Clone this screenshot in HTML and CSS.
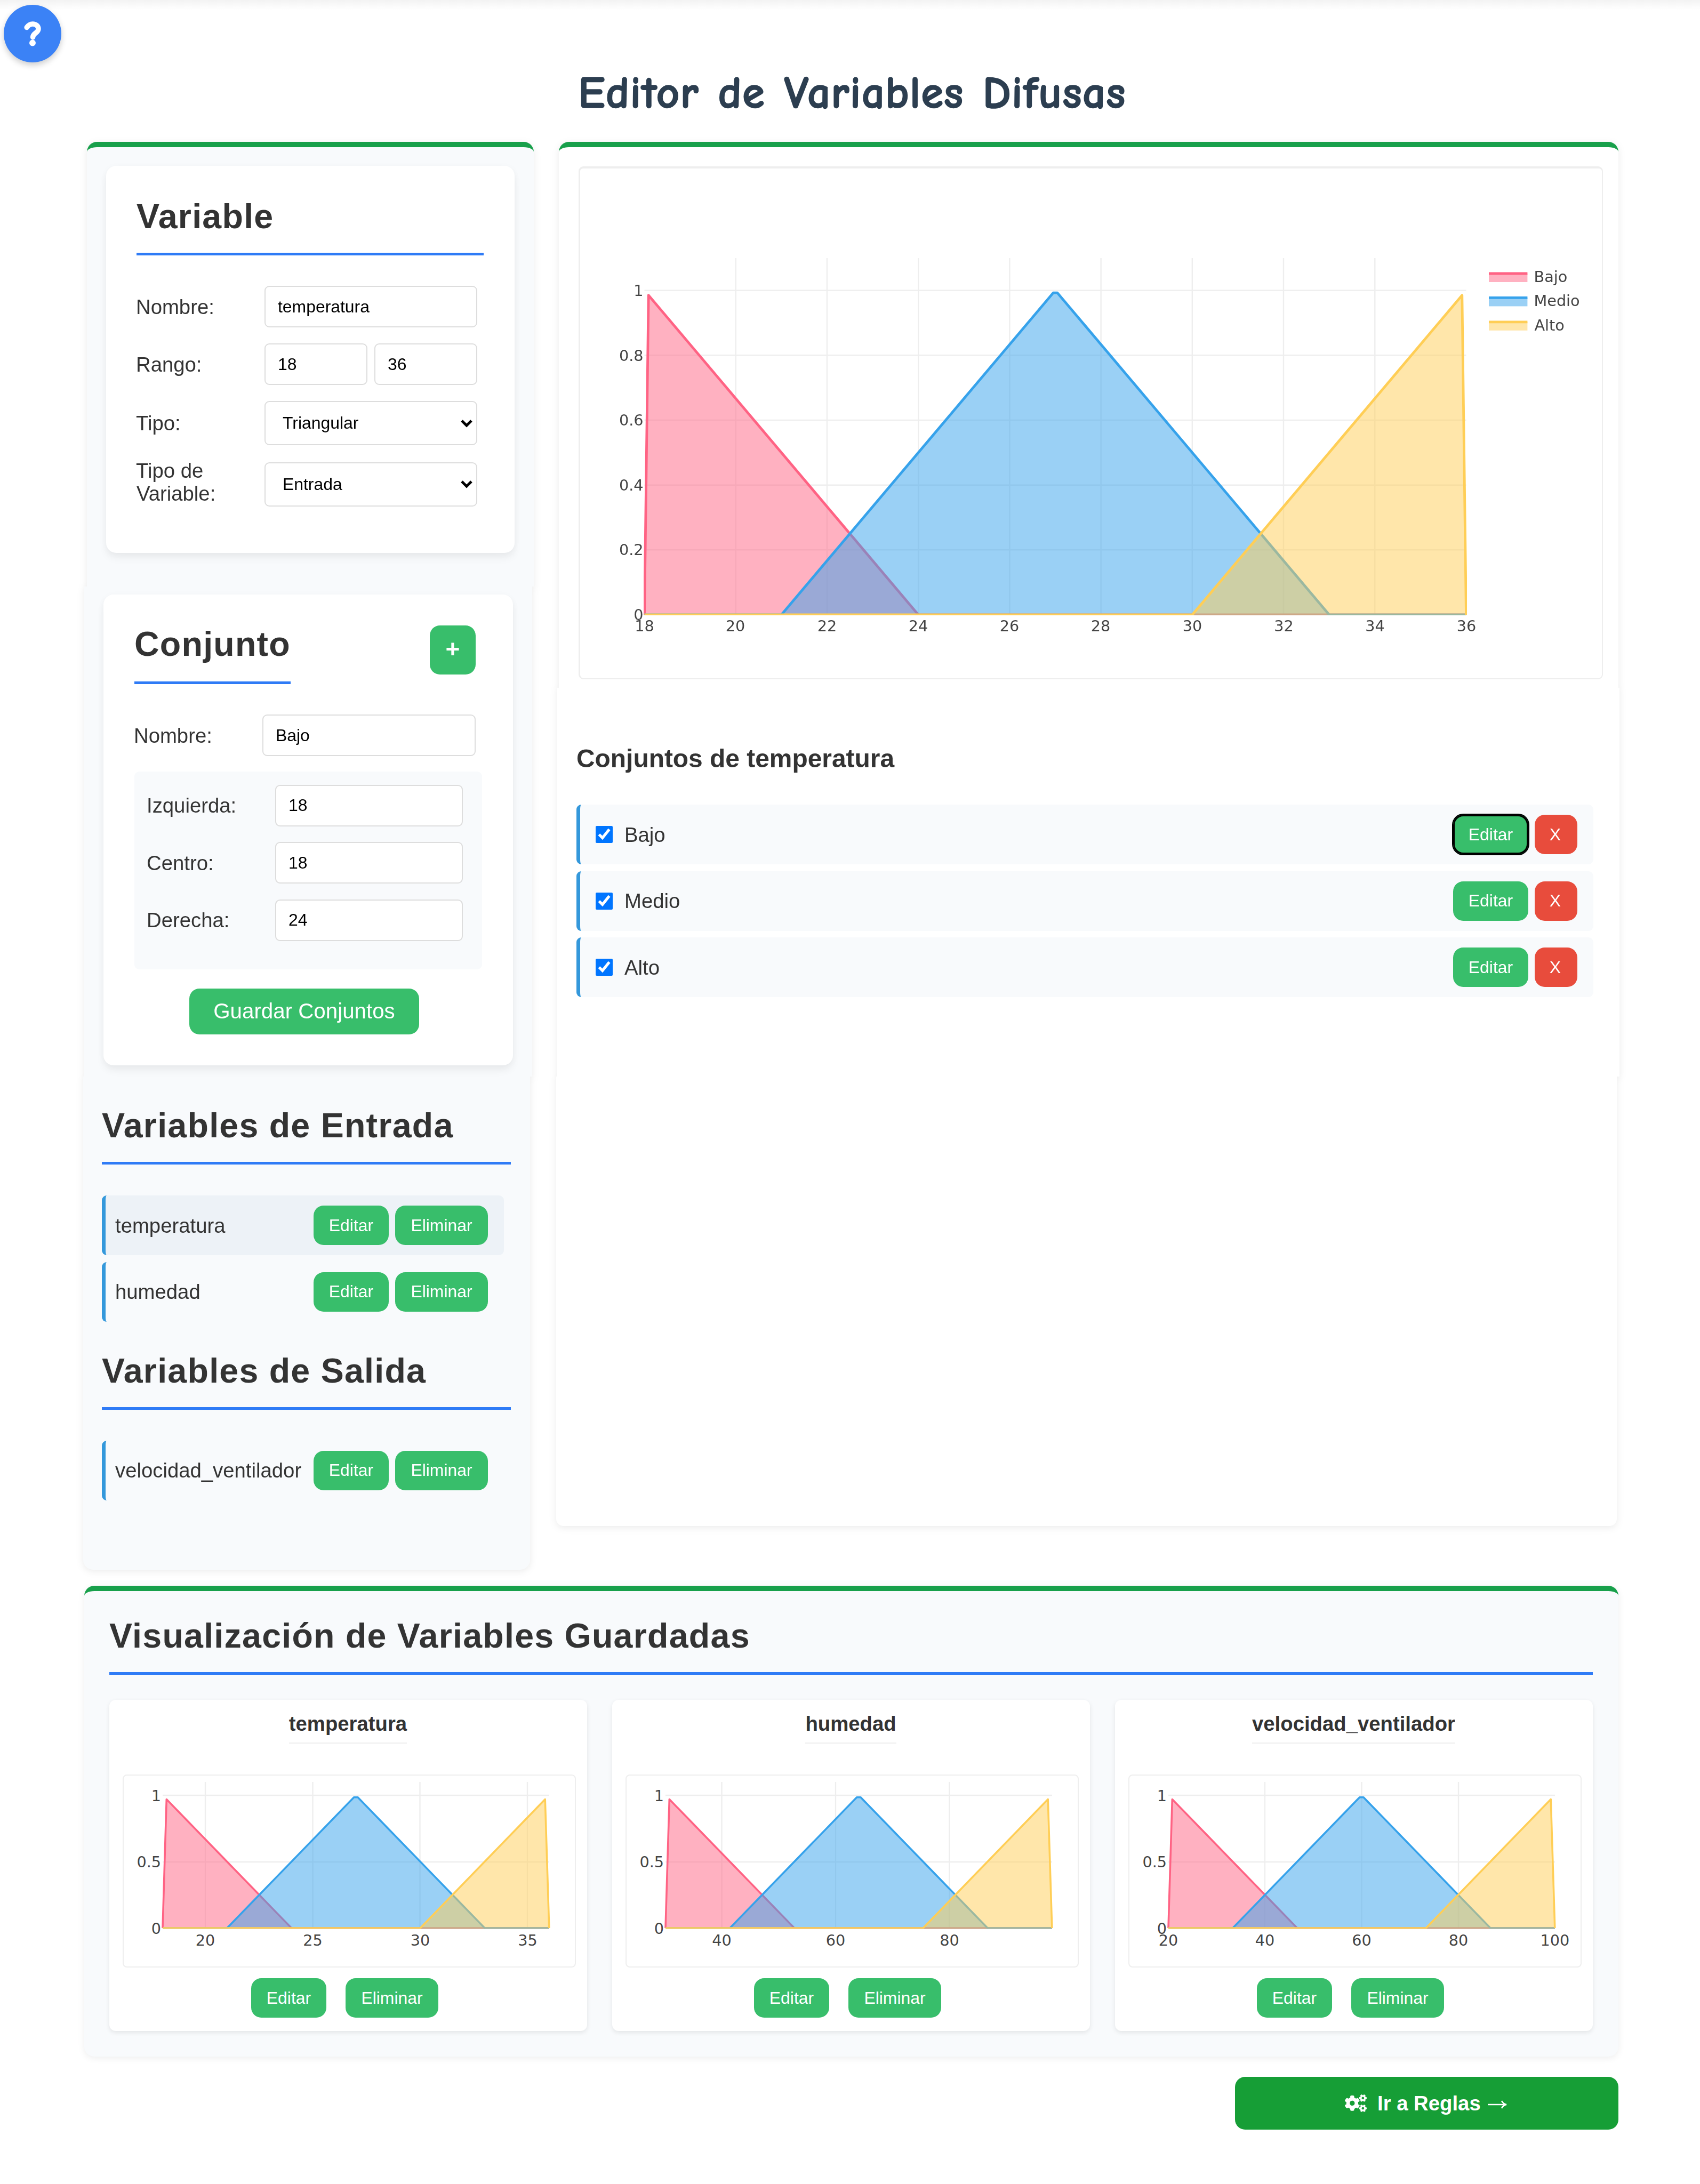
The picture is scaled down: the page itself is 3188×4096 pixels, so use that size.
FILE: index.html
```
<!DOCTYPE html>
<html lang="es">
<head>
<meta charset="utf-8">
<title>Editor de Variables Difusas</title>
<link rel="stylesheet" href="styles.css">
</head>
<body>
<svg class="defs" width="0" height="0" aria-hidden="true">
  <defs>
    <clipPath id="clip-mini"><rect x="71" y="12" width="729" height="275.500"/></clipPath>
    <clipPath id="clip-main"><rect x="119" y="170" width="1544" height="670"/></clipPath>
    <g id="mini-traces" clip-path="url(#clip-mini)">
      <path class="fill-low" d="M73 288L80.3 44.5L314.6 288Z"/>
      <path class="line-low" d="M73 286L80.3 44.5L314.6 286H797.8"/>
      <path class="fill-mid" d="M193.8 288L431.7 40.7H439L677 288Z"/>
      <path class="line-mid" d="M73 286H193.8L431.7 40.7H439L677 286H797.8"/>
      <path class="fill-high" d="M556.2 288L790.2 44.5L797.8 288Z"/>
      <path class="line-high" d="M73 286H556.2L790.2 44.5L797.8 286"/>
    </g>
    <g id="mini-axis">
      <path class="grid" d="M73 37H798M73 162H798"/>
      <text class="tick end" x="70" y="48">1</text>
      <text class="tick end" x="70" y="172">0.5</text>
      <text class="tick end" x="70" y="297">0</text>
    </g>
  </defs>
</svg>

<button class="help" aria-label="Ayuda">
  <svg width="32" height="47" viewBox="0 0 32 47"><path class="help-hook" d="M5.2 11.5C8 7.300 11.500 5 16.300 5C22 5 27 8.600 27 14.200C27 22 16.600 21.800 16.600 30"/><circle class="help-dot" cx="16" cy="40.500" r="6"/></svg>
</button>

<h1 class="title">Editor de Variables Difusas</h1>

<main class="workspace">
  <div class="sidebar">
    <div class="side-top">
      <section class="card">
        <h2 class="heading">Variable</h2>
        <div class="form">
          <div class="row"><label class="label">Nombre:</label><input class="field wide" value="temperatura"></div>
          <div class="row"><label class="label">Rango:</label><input class="field half" value="18"><input class="field half" value="36"></div>
          <div class="row"><label class="label">Tipo:</label><div class="select"><span>Triangular</span><svg width="24" height="16" viewBox="0 0 24 16"><path class="chevron" d="M3 3L12 12L21 3"/></svg></div></div>
          <div class="row"><label class="label two">Tipo de Variable:</label><div class="select"><span>Entrada</span><svg width="24" height="16" viewBox="0 0 24 16"><path class="chevron" d="M3 3L12 12L21 3"/></svg></div></div>
        </div>
      </section>
    </div>
    <div class="side-mid">
      <section class="card set-card">
        <div class="set-head">
          <h2 class="heading">Conjunto</h2>
          <button class="btn add">+</button>
        </div>
        <div class="row"><label class="label">Nombre:</label><input class="field set-name" value="Bajo"></div>
        <div class="params">
          <div class="row"><label class="label">Izquierda:</label><input class="field param" value="18"></div>
          <div class="row"><label class="label">Centro:</label><input class="field param" value="18"></div>
          <div class="row"><label class="label">Derecha:</label><input class="field param" value="24"></div>
        </div>
        <button class="btn save">Guardar Conjuntos</button>
      </section>
    </div>
    <div class="side-end">
      <h2 class="heading">Variables de Entrada</h2>
      <ul class="vars">
        <li class="var active"><span>temperatura</span><button class="btn edit">Editar</button><button class="btn del">Eliminar</button></li>
        <li class="var"><span>humedad</span><button class="btn edit">Editar</button><button class="btn del">Eliminar</button></li>
      </ul>
      <h2 class="heading out">Variables de Salida</h2>
      <ul class="vars">
        <li class="var"><span>velocidad_ventilador</span><button class="btn edit">Editar</button><button class="btn del">Eliminar</button></li>
      </ul>
    </div>
  </div>

  <div class="board">
    <div class="board-top">
      <div class="main-chart">
        <svg width="1916" height="958" viewBox="0 0 1916 958">
          <path class="grid" d="M291.7 170V839M462.900 170V839M634.200 170V839M805.400 170V839M976.600 170V839M1147.800 170V839M1319 170V839M1490.300 170V839M120.500 230.600H1661.500M120.500 352.300H1661.500M120.500 474H1661.500M120.500 595.700H1661.500M120.500 717.300H1661.500"/>
          <g class="thick" clip-path="url(#clip-main)">
            <path class="fill-low" d="M120.500 841L128.200 239.700L634.200 841Z"/>
            <path class="line-low" d="M120.500 839L128.200 239.700L634.200 839H1661.500"/>
            <path class="fill-mid" d="M377.300 841L887.100 235.200H894.900L1404.700 841Z"/>
            <path class="line-mid" d="M120.500 839H377.300L887.100 235.200H894.900L1404.700 839H1661.500"/>
            <path class="fill-high" d="M1147.800 841L1653.800 239.700L1661.500 841Z"/>
            <path class="line-high" d="M120.500 839H1147.800L1653.800 239.700L1661.500 839"/>
          </g>
          <g class="tick end">
            <text x="118.500" y="241">1</text><text x="118.500" y="363">0.8</text><text x="118.500" y="484">0.6</text><text x="118.500" y="606">0.4</text><text x="118.500" y="727">0.2</text><text x="118.500" y="849">0</text>
          </g>
          <g class="tick mid">
            <text x="120.500" y="870">18</text><text x="291" y="870">20</text><text x="463" y="870">22</text><text x="634" y="870">24</text><text x="805" y="870">26</text><text x="976" y="870">28</text><text x="1148" y="870">30</text><text x="1319.500" y="870">32</text><text x="1490.500" y="870">34</text><text x="1662" y="870">36</text>
          </g>
          <rect class="fill-low" x="1704" y="199" width="72.400" height="16"/><path class="line-low key" d="M1704 199H1776.400"/>
          <rect class="fill-mid" x="1704" y="244.400" width="72.400" height="16"/><path class="line-mid key" d="M1704 244.400H1776.400"/>
          <rect class="fill-high" x="1704" y="289.800" width="72.400" height="16"/><path class="line-high key" d="M1704 289.800H1776.400"/>
          <g class="tick"><text x="1788.500" y="215">Bajo</text><text x="1788.500" y="260.400">Medio</text><text x="1789.500" y="306">Alto</text></g>
        </svg>
      </div>
    </div>
    <div class="board-mid">
      <h3 class="subheading">Conjuntos de temperatura</h3>
      <ul class="sets">
        <li class="set"><input type="checkbox" class="check" checked><span>Bajo</span><button class="btn edit focused">Editar</button><button class="btn remove">X</button></li>
        <li class="set"><input type="checkbox" class="check" checked><span>Medio</span><button class="btn edit">Editar</button><button class="btn remove">X</button></li>
        <li class="set"><input type="checkbox" class="check" checked><span>Alto</span><button class="btn edit">Editar</button><button class="btn remove">X</button></li>
      </ul>
    </div>
    <div class="board-end"></div>
  </div>
</main>

<section class="saved">
  <h2 class="heading">Visualización de Variables Guardadas</h2>
  <div class="minis">
    <article class="mini">
      <h4 class="mini-title">temperatura</h4>
      <div class="mini-chart"><svg width="846" height="358" viewBox="0 0 846 358">
        <path class="grid" d="M153 12V286M354.500 12V286M555.500 12V286M757 12V286"/>
        <use href="#mini-axis"/><use href="#mini-traces"/>
        <g class="tick mid"><text x="153" y="319">20</text><text x="354.500" y="319">25</text><text x="556" y="319">30</text><text x="757.500" y="319">35</text></g>
      </svg></div>
      <div class="actions"><button class="btn edit">Editar</button><button class="btn del">Eliminar</button></div>
    </article>
    <article class="mini">
      <h4 class="mini-title">humedad</h4>
      <div class="mini-chart"><svg width="846" height="358" viewBox="0 0 846 358">
        <path class="grid" d="M178.500 12V286M392 12V286M605.500 12V286"/>
        <use href="#mini-axis"/><use href="#mini-traces"/>
        <g class="tick mid"><text x="178.500" y="319">40</text><text x="392" y="319">60</text><text x="605.500" y="319">80</text></g>
      </svg></div>
      <div class="actions"><button class="btn edit">Editar</button><button class="btn del">Eliminar</button></div>
    </article>
    <article class="mini">
      <h4 class="mini-title">velocidad_ventilador</h4>
      <div class="mini-chart"><svg width="846" height="358" viewBox="0 0 846 358">
        <path class="grid" d="M254 12V286M435.500 12V286M617 12V286"/>
        <use href="#mini-axis"/><use href="#mini-traces"/>
        <g class="tick mid"><text x="73" y="319">20</text><text x="254" y="319">40</text><text x="435.500" y="319">60</text><text x="617" y="319">80</text><text x="798" y="319">100</text></g>
      </svg></div>
      <div class="actions"><button class="btn edit">Editar</button><button class="btn del">Eliminar</button></div>
    </article>
  </div>
</section>

<a class="next"><svg width="41" height="33" viewBox="0 0 640 512"><path d="M512.1 191l-8.2 14.3c-3 5.3-9.4 7.5-15.1 5.4-11.8-4.4-22.6-10.7-32.1-18.6-4.6-3.8-5.8-10.5-2.8-15.7l8.2-14.3c-6.9-8-12.3-17.3-15.9-27.4h-16.500c-6 0-11.200-4.300-12.200-10.300-2-12-2.100-24.600 0-37.100 1-6 6.200-10.400 12.200-10.400h16.500c3.600-10.100 9-19.400 15.900-27.400l-8.200-14.300c-3-5.200-1.900-11.900 2.800-15.700 9.500-7.900 20.400-14.200 32.100-18.600 5.700-2.100 12.100.1 15.100 5.400l8.200 14.300c10.500-1.900 21.200-1.900 31.700 0L552 6.300c3-5.300 9.400-7.500 15.100-5.400 11.800 4.400 22.600 10.700 32.100 18.600 4.600 3.800 5.800 10.500 2.800 15.700l-8.200 14.300c6.900 8 12.300 17.300 15.900 27.400h16.500c6 0 11.200 4.300 12.200 10.300 2 12 2.100 24.600 0 37.100-1 6-6.200 10.400-12.200 10.400h-16.500c-3.600 10.100-9 19.400-15.900 27.400l8.200 14.300c3 5.200 1.900 11.900-2.800 15.700-9.500 7.900-20.400 14.200-32.100 18.600-5.700 2.100-12.100-.1-15.100-5.400l-8.200-14.300c-10.400 1.900-21.200 1.900-31.700 0zm-10.500-58.800c38.500 29.600 82.400-14.300 52.800-52.800-38.500-29.700-82.400 14.300-52.800 52.800zM386.300 286.100l33.700 16.800c10.100 5.800 14.500 18.100 10.500 29.100-8.900 24.200-26.400 46.400-42.600 65.800-7.400 8.900-20.200 11.100-30.300 5.300l-29.100-16.800c-16 13.700-34.600 24.600-54.900 31.700v33.600c0 11.600-8.300 21.600-19.700 23.600-24.600 4.200-50.400 4.400-75.900 0-11.500-2-20-11.900-20-23.600V418c-20.300-7.200-38.900-18-54.900-31.700L74 403c-10 5.800-22.900 3.600-30.300-5.300-16.200-19.400-33.300-41.600-42.200-65.700-4-10.900.4-23.200 10.500-29.100l33.300-16.800c-3.900-20.900-3.900-42.400 0-63.400L12 205.800c-10.100-5.800-14.600-18.100-10.500-29 8.900-24.200 26-46.400 42.200-65.800 7.400-8.900 20.200-11.100 30.300-5.300l29.100 16.800c16-13.700 34.600-24.600 54.900-31.700V57.100c0-11.500 8.200-21.500 19.600-23.500 24.600-4.200 50.500-4.400 76-.1 11.500 2 20 11.900 20 23.600v33.600c20.300 7.200 38.900 18 54.900 31.700l29.100-16.800c10-5.800 22.900-3.600 30.300 5.300 16.200 19.400 33.200 41.600 42.100 65.800 4 10.900.1 23.200-10 29.100l-33.700 16.800c3.900 21 3.900 42.500 0 63.500zm-117.600 21.100c59.200-77-28.700-164.900-105.700-105.700-59.200 77 28.700 164.900 105.700 105.700zm243.400 182.700l-8.200 14.300c-3 5.300-9.400 7.500-15.100 5.400-11.800-4.400-22.600-10.700-32.100-18.600-4.600-3.800-5.800-10.500-2.800-15.700l8.200-14.300c-6.900-8-12.300-17.300-15.900-27.400h-16.500c-6 0-11.200-4.300-12.200-10.300-2-12-2.100-24.600 0-37.100 1-6 6.200-10.400 12.200-10.400h16.500c3.600-10.100 9-19.400 15.900-27.400l-8.200-14.300c-3-5.200-1.900-11.900 2.800-15.700 9.500-7.900 20.400-14.200 32.100-18.600 5.700-2.100 12.100.1 15.100 5.400l8.200 14.300c10.500-1.900 21.200-1.900 31.700 0l8.200-14.300c3-5.300 9.400-7.500 15.100-5.400 11.800 4.400 22.600 10.700 32.100 18.600 4.600 3.800 5.800 10.500 2.800 15.700l-8.200 14.300c6.900 8 12.300 17.300 15.900 27.400h16.500c6 0 11.200 4.300 12.200 10.300 2 12 2.100 24.600 0 37.100-1 6-6.200 10.400-12.200 10.400h-16.500c-3.600 10.100-9 19.400-15.900 27.400l8.200 14.300c3 5.200 1.900 11.900-2.800 15.700-9.500 7.900-20.400 14.200-32.100 18.600-5.700 2.100-12.100-.1-15.100-5.400l-8.200-14.300c-10.400 1.900-21.200 1.900-31.700 0zM501.600 431c38.500 29.600 82.400-14.300 52.800-52.800-38.500-29.600-82.400 14.300-52.800 52.800z"/></svg><span>Ir a Reglas</span><svg class="arrow" width="38" height="20" viewBox="0 0 38 20"><path d="M1 10H35M27 3C29 7 31 9 36 10C31 11 29 13 27 17"/></svg></a>
</body>
</html>
```

FILE: styles.css
```
* { box-sizing: border-box; }
body {
  margin: 0; width: 3188px; height: 4096px; overflow: hidden; background: #fff;
  font: 38.300px/43px "Liberation Sans", Arial, sans-serif; color: #333;
  display: flex; flex-direction: column;
  background-image: linear-gradient(#f3f3f3, #fff 18px); background-repeat: no-repeat;
}
h1, h2, h3, h4, ul { margin: 0; padding: 0; }
ul { list-style: none; }
svg { display: block; flex: none; }
.defs { position: absolute; }

.help {
  position: absolute; left: 7px; top: 9px; width: 108px; height: 108px; padding: 0 1px 0 0; border: 0;
  border-radius: 50%; background: #3b82f6; box-shadow: 0 5px 12px rgba(0,0,0,.2);
  display: flex; align-items: center; justify-content: center;
}
.help-hook { fill: none; stroke: #fff; stroke-width: 9.500; stroke-linecap: round; stroke-linejoin: round; }
.help-dot { fill: #fff; }

.title {
  height: 266px; padding-top: 119px; padding-left: 8px; text-align: center; white-space: nowrap;
  font: 700 85px/110px "Comic Sans MS", "Comic Neue", Lato, sans-serif; letter-spacing: 1.200px; word-spacing: 4px; color: #2c3e50;
  -webkit-text-stroke: 1.600px #2c3e50;
}

.workspace { display: flex; align-items: flex-start; gap: 42px; height: 2708px; flex: none; margin-left: 156px; }
.sidebar { width: 845px; filter: drop-shadow(0 3px 7px rgba(0,0,0,.08)); }
.side-top, .side-mid, .side-end { background: #f8fafc; }
.side-top { margin-left: 7px; width: 838px; height: 834px; border-top: 10px solid #18a04b; border-radius: 19px 19px 0 0; padding: 35px 36px 0; }
.side-mid { margin-left: 2px; width: 840px; height: 919px; padding: 15px 36px 0; }
.side-end { width: 838px; height: 925px; padding: 57px 36px 0 35px; border-radius: 0 0 19px 19px; }

.card { background: #fff; border-radius: 19px; box-shadow: 0 10px 15px rgba(0,0,0,.05), 0 2px 14px rgba(0,0,0,.03); height: 726px; padding: 60px 58px 0 57px; }
.heading { font-size: 64.500px; line-height: 70px; letter-spacing: 1.250px; padding-bottom: 33px; border-bottom: 5px solid #2f7bf6; white-space: nowrap; }
.form { margin-top: 57px; display: flex; flex-direction: column; gap: 30px; }
.row { display: flex; align-items: center; }
.label { width: 240px; flex: none; padding-right: 52px; white-space: nowrap; text-indent: -1px; }
.label.two { white-space: normal; margin: -4px 0 4px; }
.field { height: 78px; border: 2.400px solid #ddd; border-radius: 9px; padding: 0 22px 0 23px; font: 31.900px "Liberation Sans", Arial, sans-serif; color: #000; background: #fff; outline: 0; }
.wide { width: 399px; }
.half { width: 193px; }
.half + .half { margin-left: 13px; }
.select { width: 399px; height: 83px; border: 2.400px solid #ddd; border-radius: 9px; padding: 0 6px 0 32px; font-size: 31.900px; color: #000; display: flex; align-items: center; justify-content: space-between; }
.chevron { fill: none; stroke: #000; stroke-width: 5; }

.set-card { height: 883px; padding: 58px 70px 0 58px; }
.set-head { display: flex; justify-content: space-between; align-items: flex-start; margin-bottom: 57px; }
.set-head .heading { padding-bottom: 35px; }
.set-name { width: 400px; }
.params { width: 652px; height: 371px; margin-top: 29px; padding: 24.500px 24px; background: #f8fafc; border-radius: 9px; display: flex; flex-direction: column; gap: 29.600px; }
.param { width: 352px; }

.btn { border: 0; border-radius: 19px; background: #38be6b; color: #fff; padding: 0; height: 74px; flex: none; font: 31.900px/37px "Liberation Sans", Arial, sans-serif; }
.edit { width: 141px; }
.del { width: 174px; }
.add { width: 86px; height: 92px; padding-bottom: 3px; font-size: 46px; font-weight: 700; }
.save { display: block; width: 431px; height: 86px; padding-bottom: 2px; font-size: 40.300px; margin: 36px 0 0 103px; }
.remove { width: 80px; background: #e84c3c; }
.focused { box-shadow: inset 0 0 0 3px #000, 0 0 0 2px #000; }

.vars { margin-top: 58px; display: flex; flex-direction: column; gap: 12.500px; }
.var { width: 754px; height: 112px; border-left: 7.500px solid #3498db; border-radius: 9px; display: flex; align-items: center; gap: 12px; padding: 0 30px 0 18px; }
.var span { flex: 1; }
.var.active { background: #edf2f7; }
.heading.out { margin-top: 57px; }

.board { width: 1994px; filter: drop-shadow(0 3px 7px rgba(0,0,0,.08)); }
.board-top, .board-mid, .board-end { background: #fff; }
.board-top { margin-left: 5px; width: 1987px; height: 1024px; border-top: 10px solid #18a04b; border-radius: 19px 19px 0 0; padding: 36px 0 0 37px; }
.board-mid { margin-left: 2px; width: 1992px; height: 729px; padding: 106px 49px 0 36px; }
.board-end { width: 1989px; height: 843px; border-radius: 0 0 14px 14px; }
.main-chart { width: 1921px; height: 962px; border: 2px solid #eee; border-top-width: 4px; border-left-width: 3px; border-radius: 9px; }
.main-chart svg { margin-top: -2px; }

.grid { stroke: #eee; stroke-width: 2.400; fill: none; }
.fill-low { fill: rgba(255,99,132,.5); }
.fill-mid { fill: rgba(54,162,235,.5); }
.fill-high { fill: rgba(255,206,86,.5); }
.line-low, .line-mid, .line-high { fill: none; stroke-width: 3.600; stroke-linejoin: round; }
.line-low { stroke: #ff6384; }
.line-mid { stroke: #36a2eb; }
.line-high { stroke: #ffce56; }
.thick path, .key { stroke-width: 4.800; }
.thick .fill-low, .thick .fill-mid, .thick .fill-high { stroke: none; }
.tick { font: 28.700px "DejaVu Sans", Verdana, sans-serif; fill: #444; }
.end { text-anchor: end; }
.mid { text-anchor: middle; }

.subheading { font-size: 47.900px; line-height: 54px; }
.sets { margin-top: 59px; display: flex; flex-direction: column; gap: 12.500px; }
.set { height: 112px; background: #f8fafc; border-left: 7.500px solid #3498db; border-radius: 9px; display: flex; align-items: center; padding: 0 30px 0 29px; }
.check { width: 32px; height: 32px; margin: 0 22px 0 0; accent-color: #0075ff; }
.set span { flex: 1; }
.remove { margin-left: 12px; padding-right: 3px; }

.saved { margin-left: 158px; width: 2877px; height: 883px; flex: none; border-top: 10px solid #18a04b; border-radius: 19px; background: #f8fafc; box-shadow: 0 3px 14px rgba(0,0,0,.07); padding: 49px 48px 0 47px; }
.minis { display: grid; grid-template-columns: repeat(3, 1fr); gap: 47px; margin-top: 47px; }
.mini { height: 621px; background: #fff; border-radius: 12px; box-shadow: 0 3px 9px rgba(0,0,0,.09); display: flex; flex-direction: column; align-items: center; padding: 23px 1px 0 0; }
.mini-title { font-size: 38.300px; line-height: 43px; padding-bottom: 14px; border-bottom: 2.400px solid #eee; }
.mini-chart { align-self: flex-start; margin: 58px 0 0 24.500px; width: 850px; height: 362px; border: 2px solid #eee; border-radius: 8px; }
.actions { display: flex; gap: 36px; margin: 20px 12px 0 0; }

.next { align-self: flex-end; margin: 38px 153px 0 0; width: 719px; height: 99px; flex: none; border-radius: 19px; background: #169e36; color: #fff; font-weight: 700; display: flex; align-items: center; padding-left: 206px; white-space: nowrap; }
.next svg { fill: #fff; }
.next span { margin-left: 20px; }
.next .arrow { margin: 4px 0 0 12px; fill: none; stroke: #fff; stroke-width: 2.600; }
```
